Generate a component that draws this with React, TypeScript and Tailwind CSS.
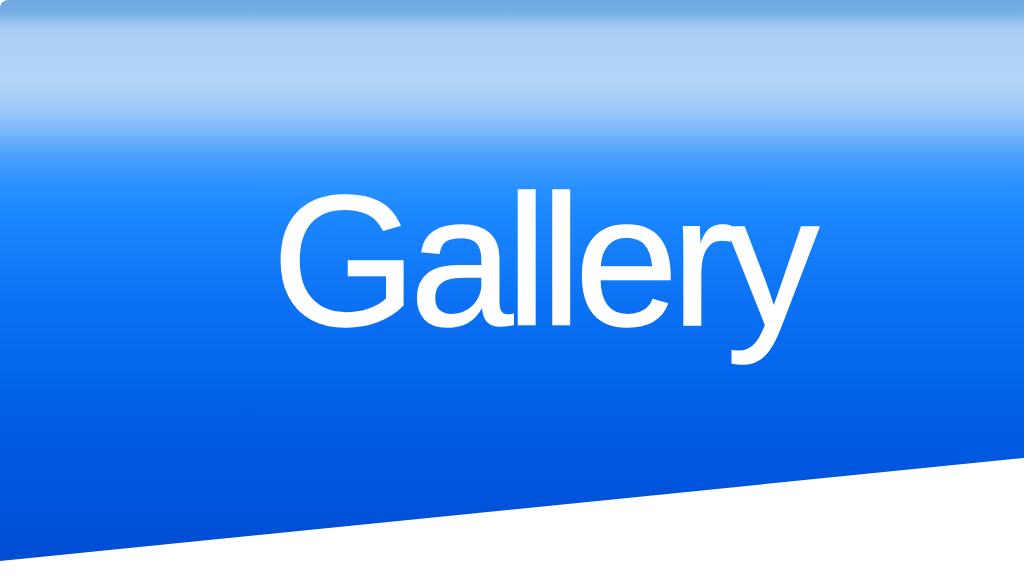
export default function App() {
  return (
    <div className="h-[576px] w-[1024px] overflow-hidden bg-white">
      <div className="h-full w-full rounded-tl-[8px] bg-[linear-gradient(to_bottom,#6fa8e0_0%,#75aee6_2%,#aacff6_5%,#b2d4f7_14%,#a6cdf8_18%,#78b6fa_23%,#4aa0fc_27%,#2690ff_33%,#1a86fd_38%,#0c72f4_52%,#0062ea_68%,#0054dc_85%,#004cd2_100%)] [clip-path:polygon(0_0,100%_0,100%_458px,0_561px)]">
        <div className="pl-[272px] pt-[168px] text-[186px] leading-none tracking-[-7px] text-white [-webkit-text-stroke:1.5px_white] [font-family:'Liberation_Sans',Arial,sans-serif]">
          Gallery
        </div>
      </div>
    </div>
  );
}
